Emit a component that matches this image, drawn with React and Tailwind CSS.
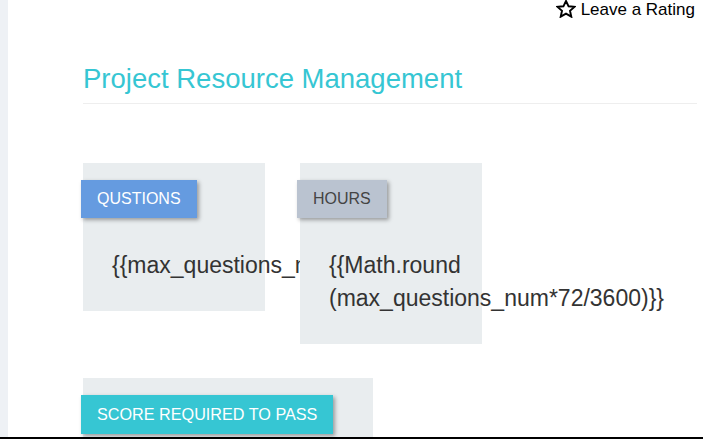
export default function App() {
  const font = { fontFamily: '"Liberation Sans", Arial, sans-serif' };
  return (
    <div
      className="flex h-[439px] w-[703px] overflow-hidden border-b-2 border-black bg-white text-[#333]"
      style={font}
    >
      <div className="w-[8px] shrink-0 bg-[#eef1f5]" />
      <div className="flex min-w-0 flex-1 flex-col pl-[75px] pr-[6px]">
        <div className="flex h-[19px] items-start justify-end gap-[5px] pr-[2px] text-[17px] leading-[19px] text-black">
          <svg width="20" height="18" viewBox="0 0 20 18">
            <polygon
              points="10,1 12.6,6.3 18.5,6.9 14,10.8 15.3,16.7 10,13.7 4.7,16.7 6,10.8 1.5,6.9 7.4,6.3"
              fill="white"
              stroke="black"
              strokeWidth="1.9"
              strokeLinejoin="miter"
            />
          </svg>
          <span>Leave a Rating</span>
        </div>
        <div className="mt-[44px] border-b border-[#eee] pb-[9px]">
          <h1 className="text-[27.5px] font-normal leading-[31px] text-[#36c6d3]">
            Project Resource Management
          </h1>
        </div>
        <div className="mt-[59px] flex items-start gap-[35px]">
          <div className="w-[182px] shrink-0 bg-[#e9edef] pb-[29px]">
            <div className="ml-[-2px] mt-[17px] inline-block h-[38px] bg-[#659be0] px-[16px] text-[16px] leading-[38px] text-white shadow-[2px_2px_4px_rgba(0,0,0,0.35)]">
              QUSTIONS
            </div>
            <div className="mt-[31px] pl-[29px] text-[23px] leading-[33px]">
              {"{{max_questions_num}}"}
            </div>
          </div>
          <div className="w-[182px] shrink-0 bg-[#e9edef] pb-[29px]">
            <div className="ml-[-3px] mt-[17px] inline-block h-[38px] bg-[#bac3d0] px-[16px] text-[16px] leading-[38px] text-[#444] shadow-[2px_2px_4px_rgba(0,0,0,0.35)]">
              HOURS
            </div>
            <div className="mt-[31px] pl-[29px] text-[23px] leading-[33px]">
              {"{{Math.round (max_questions_num*72/3600)}}"}
            </div>
          </div>
        </div>
        <div className="mt-[34px] flex">
          <div className="h-[80px] w-[290px] shrink-0 bg-[#e9edef]">
            <div className="ml-[-2px] mt-[17px] inline-block h-[39px] bg-[#36c6d3] px-[16px] text-[16.2px] leading-[39px] text-white shadow-[2px_2px_4px_rgba(0,0,0,0.35)]">
              SCORE REQUIRED TO PASS
            </div>
          </div>
        </div>
      </div>
    </div>
  );
}
